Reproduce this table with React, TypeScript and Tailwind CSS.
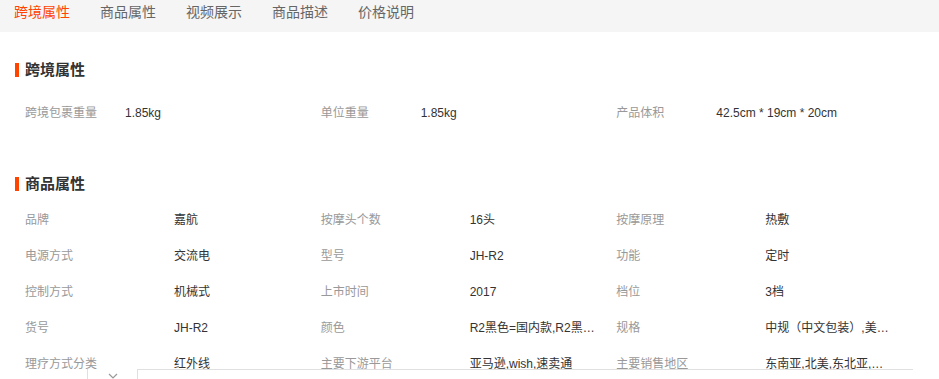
const TABS = ["跨境属性", "商品属性", "视频展示", "商品描述", "价格说明"];

const CROSS_BORDER = [
  { label: "跨境包裹重量", value: "1.85kg" },
  { label: "单位重量", value: "1.85kg" },
  { label: "产品体积", value: "42.5cm * 19cm * 20cm" },
];

const PRODUCT_ATTRS = [
  { label: "品牌", value: "嘉航" },
  { label: "按摩头个数", value: "16头" },
  { label: "按摩原理", value: "热敷" },
  { label: "电源方式", value: "交流电" },
  { label: "型号", value: "JH-R2" },
  { label: "功能", value: "定时" },
  { label: "控制方式", value: "机械式" },
  { label: "上市时间", value: "2017" },
  { label: "档位", value: "3档" },
  { label: "货号", value: "JH-R2" },
  { label: "颜色", value: "R2黑色=国内款,R2黑色=出口款" },
  { label: "规格", value: "中规（中文包装）,美规（英文包装）" },
  { label: "理疗方式分类", value: "红外线" },
  { label: "主要下游平台", value: "亚马逊,wish,速卖通" },
  { label: "主要销售地区", value: "东南亚,北美,东北亚,欧洲" },
];

function SectionTitle({ title }: { title: string }) {
  return (
    <div className="flex items-center h-5 pl-[15px]">
      <span className="w-1 h-[14px] bg-[#ff4400] mr-[6px]" />
      <h3 className="text-[15px] font-bold text-[#333] leading-5">{title}</h3>
    </div>
  );
}

export default function App() {
  return (
    <div
      className="relative w-[939px] h-[379px] overflow-hidden bg-white"
      style={{ fontFamily: '"Liberation Sans", "Noto Sans CJK SC", sans-serif' }}
    >
      {/* tabs */}
      <div className="h-8 bg-[#f5f5f5] flex gap-[30px] pl-[14px] pt-1">
        {TABS.map((t, i) => (
          <span key={t} className={`text-[14px] leading-4 ${i === 0 ? "text-[#ff4400]" : "text-[#666]"}`}>
            {t}
          </span>
        ))}
      </div>

      {/* 跨境属性 */}
      <div className="mt-[28px]">
        <SectionTitle title="跨境属性" />
      </div>
      <div className="mt-[15px] pl-[25px] w-[912px] grid grid-cols-3">
        {CROSS_BORDER.map((a) => (
          <div key={a.label} className="flex items-center h-9 text-[12px]">
            <span className="w-[100px] text-[#999]">{a.label}</span>
            <span className="text-[#333]">{a.value}</span>
          </div>
        ))}
      </div>

      {/* 商品属性 */}
      <div className="mt-[43px]">
        <SectionTitle title="商品属性" />
      </div>
      <div className="mt-[8px] pl-[25px] w-[912px] grid grid-cols-3">
        {PRODUCT_ATTRS.map((a) => (
          <div key={a.label} className="flex items-center h-9 text-[12px]">
            <span className="w-[149px] shrink-0 text-[#999]">{a.label}</span>
            <span className="w-[127px] truncate text-[#333]">{a.value}</span>
          </div>
        ))}
      </div>

      {/* bottom floating bar */}
      <div className="absolute left-[87px] top-[369px] flex h-6">
        <div className="w-[51px] h-full border-x border-[#e0e0e0] bg-white flex justify-center pt-[4px]">
          <svg width="10" height="6" viewBox="0 0 10 6" fill="none" stroke="#999" strokeWidth="1.2">
            <polyline points="1,1 5,5 9,1" />
          </svg>
        </div>
        <div className="w-[775px] h-full border-t border-[#e0e0e0] bg-white" />
      </div>
    </div>
  );
}
